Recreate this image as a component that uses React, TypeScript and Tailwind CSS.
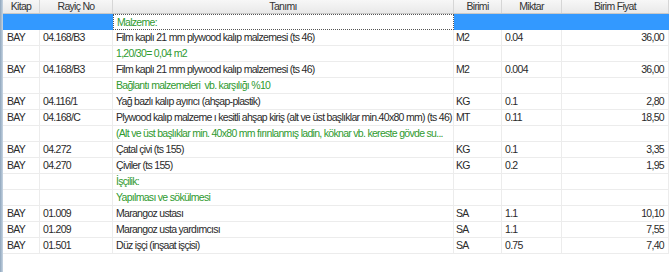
import React from "react";

type Row = {
  kitap?: string;
  rayic?: string;
  tanim: string;
  birim?: string;
  miktar?: string;
  fiyat?: string;
  note?: boolean;
};

const rows: Row[] = [
  { tanim: "Malzeme:", note: true },
  { kitap: "BAY", rayic: "04.168/B3", tanim: "Film kaplı 21 mm plywood kalıp malzemesi (ts 46)", birim: "M2", miktar: "0.04", fiyat: "36,00" },
  { tanim: "1,20/30= 0,04 m2", note: true },
  { kitap: "BAY", rayic: "04.168/B3", tanim: "Film kaplı 21 mm plywood kalıp malzemesi (ts 46)", birim: "M2", miktar: "0.004", fiyat: "36,00" },
  { tanim: "Bağlantı malzemeleri  vb. karşılığı %10", note: true },
  { kitap: "BAY", rayic: "04.116/1", tanim: "Yağ bazlı kalıp ayırıcı (ahşap-plastik)", birim: "KG", miktar: "0.1", fiyat: "2,80" },
  { kitap: "BAY", rayic: "04.168/C", tanim: "Plywood kalıp malzeme ı kesitli ahşap kiriş (alt ve üst başlıklar min.40x80 mm) (ts 46)", birim: "MT", miktar: "0.11", fiyat: "18,50" },
  { tanim: "(Alt ve üst başlıklar min. 40x80 mm fırınlanmış ladin, köknar vb. kereste gövde su...", note: true },
  { kitap: "BAY", rayic: "04.272", tanim: "Çatal çivi (ts 155)", birim: "KG", miktar: "0.1", fiyat: "3,35" },
  { kitap: "BAY", rayic: "04.270", tanim: "Çiviler (ts 155)", birim: "KG", miktar: "0.2", fiyat: "1,95" },
  { tanim: "İşçilik:", note: true },
  { tanim: "Yapılması ve sökülmesi", note: true },
  { kitap: "BAY", rayic: "01.009", tanim: "Marangoz ustası", birim: "SA", miktar: "1.1", fiyat: "10,10" },
  { kitap: "BAY", rayic: "01.209", tanim: "Marangoz usta yardımcısı", birim: "SA", miktar: "1.1", fiyat: "7,55" },
  { kitap: "BAY", rayic: "01.501", tanim: "Düz işçi (inşaat işçisi)", birim: "SA", miktar: "0.75", fiyat: "7,40" },
];

const cols = "grid grid-cols-[37px_73px_341px_48px_60px_107px]";

function HeadCell({ children }: { children: React.ReactNode }) {
  return (
    <div className="flex h-[13px] items-center justify-center overflow-hidden border-r border-[#d6d6d6] bg-gradient-to-b from-[#f7f7f7] to-[#e9e9e9] text-[#333]">
      {children}
    </div>
  );
}

export default function App() {
  return (
    <div
      className="flex h-[272px] w-[669px] overflow-hidden bg-white text-[10.5px] leading-none tracking-[-0.7px] text-[#2a2a2a]"
      style={{ fontFamily: '"Liberation Sans", Arial, sans-serif' }}
    >
      <div className="w-[3px] shrink-0 bg-gradient-to-r from-[#8fa6bd] to-[#c9d6e3]" />
      <div className="flex-1">
        <div className={`${cols} border-b border-[#c8c8c8]`}>
          <HeadCell>Kitap</HeadCell>
          <HeadCell>Rayiç No</HeadCell>
          <HeadCell>Tanımı</HeadCell>
          <HeadCell>Birimi</HeadCell>
          <HeadCell>Miktar</HeadCell>
          <HeadCell>Birim Fiyat</HeadCell>
        </div>
        {rows.map((r, i) => {
          const sel = i === 0;
          const cell = `flex h-[16px] items-center overflow-hidden whitespace-pre border-b border-r ${
            sel ? "border-[#3399ff] bg-[#3399ff]" : "border-[#ececec]"
          }`;
          return (
            <div key={i} className={cols}>
              <div className={`${cell} pl-[4px]`}>{r.kitap}</div>
              <div className={`${cell} pl-[3px]`}>{r.rayic}</div>
              <div
                className={`flex h-[16px] items-center overflow-hidden whitespace-pre border-r pl-[3px] ${
                  sel ? "border border-dotted border-[#555] bg-white" : "border-b border-[#ececec]"
                } ${r.note ? "text-[#2f9a2f]" : ""}`}
              >
                {r.tanim}
              </div>
              <div className={`${cell} pl-[2px]`}>{r.birim}</div>
              <div className={`${cell} pl-[3px]`}>{r.miktar}</div>
              <div className={`${cell} justify-end pr-[4px]`}>{r.fiyat}</div>
            </div>
          );
        })}
      </div>
    </div>
  );
}
